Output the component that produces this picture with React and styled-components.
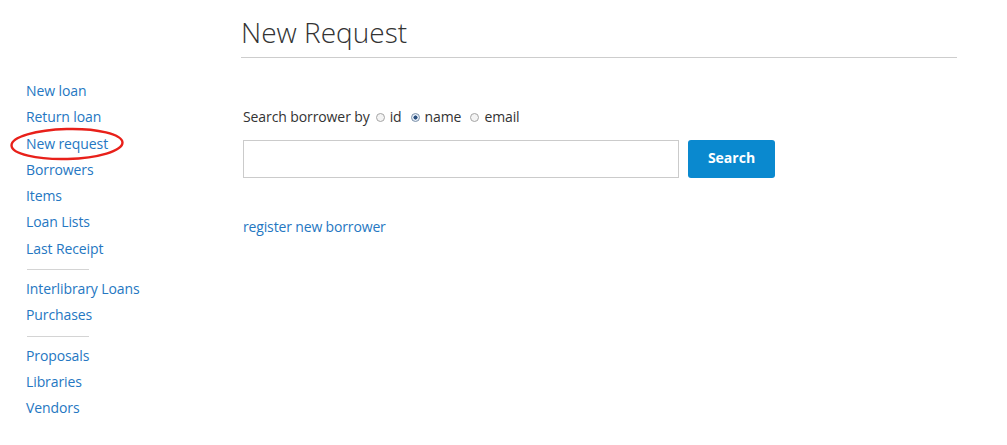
import styled, { createGlobalStyle } from "styled-components";

const GlobalStyle = createGlobalStyle`
    body {
        margin: 0;
        background: #fff;
        font-family: "Open Sans", "Liberation Sans", sans-serif;
        color: #333;
    }
`;

const Page = styled.div`
    display: flex;
    flex-direction: row;
    width: 1007px;
    height: 445px;
`;

const Sidebar = styled.nav`
    width: 215px;
    padding: 78px 0 0 26px;
    display: flex;
    flex-direction: column;
`;

const NavItem = styled.a`
    position: relative;
    display: block;
    font-size: 14px;
    letter-spacing: -0.1px;
    line-height: 26.3px;
    color: #2577c2;
    text-decoration: none;
    cursor: pointer;
`;

const Divider = styled.hr`
    width: 62px;
    margin: 7px 0 6px 1px;
    border: none;
    border-top: 1px solid #d4d4d4;
`;

const Circle = styled.svg`
    position: absolute;
    left: -16px;
    top: -4px;
    width: 114px;
    height: 34px;
    pointer-events: none;
`;

const Main = styled.main`
    width: 716px;
    padding-top: 12px;
`;

const Title = styled.h1`
    margin: 0;
    font-size: 28px;
    font-weight: 300;
    line-height: 40px;
    color: #333;
    padding-bottom: 5px;
    border-bottom: 1px solid #cdcdcd;
`;

const Form = styled.div`
    padding-left: 2px;
    margin-top: 49px;
`;

const SearchBy = styled.div`
    display: flex;
    align-items: center;
    font-size: 14px;
    letter-spacing: -0.1px;
    line-height: 20px;
    color: #333;
`;

const Option = styled.label`
    display: flex;
    align-items: center;
    margin-left: ${(p) => (p.first ? "6px" : "9px")};
    gap: 5px;
`;

const Radio = styled.input.attrs({ type: "radio" })`
    appearance: none;
    margin: 1px 0 0 0;
    width: 9px;
    height: 9px;
    border: 1px solid #a5a5a5;
    border-radius: 50%;
    background: #f4f4f4;
    &:checked {
        border-color: #7a8fa8;
        background: radial-gradient(circle, #2a4f7e 0 1.8px, #e6eef8 2.3px);
    }
`;

const SearchRow = styled.div`
    display: flex;
    margin-top: 13px;
`;

const TextInput = styled.input`
    box-sizing: border-box;
    width: 436px;
    height: 38px;
    border: 1px solid #cbcbcb;
    padding: 0 8px;
    font-size: 14px;
    font-family: inherit;
`;

const SearchButton = styled.button`
    margin-left: 9px;
    width: 87px;
    height: 38px;
    padding: 0 0 3px;
    border: none;
    border-radius: 3px;
    background: #0a89cf;
    color: #fff;
    font-family: inherit;
    font-size: 14px;
    font-weight: 700;
    cursor: pointer;
`;

const RegisterLink = styled.a`
    display: block;
    margin-top: 39px;
    font-size: 14px;
    letter-spacing: -0.15px;
    line-height: 20px;
    color: #2577c2;
    text-decoration: none;
`;

const groups = [
    ["New loan", "Return loan", "New request", "Borrowers", "Items", "Loan Lists", "Last Receipt"],
    ["Interlibrary Loans", "Purchases"],
    ["Proposals", "Libraries", "Vendors"],
];

function App() {
    return (
        <>
            <GlobalStyle />
            <Page>
                <Sidebar>
                    {groups.map((group, i) => (
                        <div key={i}>
                            {i > 0 && <Divider />}
                            {group.map((label) => (
                                <NavItem key={label}>
                                    {label}
                                    {label === "New request" && (
                                        <Circle viewBox="0 0 114 34">
                                            <ellipse
                                                cx="57"
                                                cy="17"
                                                rx="55.5"
                                                ry="15"
                                                fill="none"
                                                stroke="#e8201a"
                                                strokeWidth="2.4"
                                                transform="rotate(-1.5 57 17)"
                                            />
                                        </Circle>
                                    )}
                                </NavItem>
                            ))}
                        </div>
                    ))}
                </Sidebar>
                <Main>
                    <Title>New Request</Title>
                    <Form>
                        <SearchBy>
                            Search borrower by
                            <Option first>
                                <Radio name="by" />
                                id
                            </Option>
                            <Option>
                                <Radio name="by" defaultChecked />
                                name
                            </Option>
                            <Option>
                                <Radio name="by" />
                                email
                            </Option>
                        </SearchBy>
                        <SearchRow>
                            <TextInput type="text" />
                            <SearchButton>Search</SearchButton>
                        </SearchRow>
                        <RegisterLink>register new borrower</RegisterLink>
                    </Form>
                </Main>
            </Page>
        </>
    );
}

export default App;
